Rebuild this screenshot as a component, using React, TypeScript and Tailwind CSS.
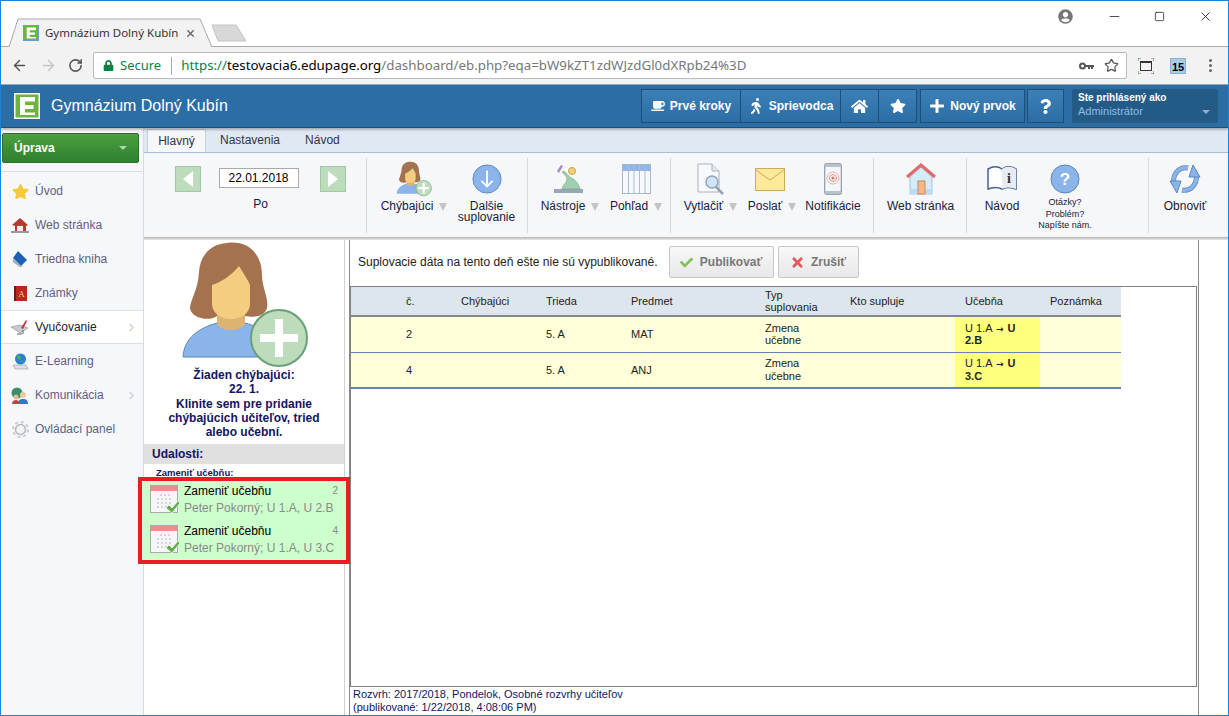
import { ArrowLeft, ArrowRight, ChevronRight, Minus, RotateCw, Square, Star, X } from "lucide-react";
import type { ReactNode } from "react";
import { FaCheck, FaCoffee, FaHome, FaLock, FaPlus, FaQuestion, FaStar, FaTimes, FaUserCircle, FaWalking } from "react-icons/fa";

const Caret = () => (
  <span className="inline-block w-0 h-0 border-x-[4px] border-x-transparent border-t-[8px] border-t-[#c4c4c4]" />
);

function ELogo({ size, edge = "#fff" }: { size: number; edge?: string }) {
  return (
    <svg width={size} height={size} viewBox="0 0 26 26">
      <rect x=".75" y=".75" width="24.500" height="24.500" fill="#6cb33f" stroke={edge} strokeWidth="1.500" />
      <path d="M6 4h15v4.500H11V12h8.500v4H11v3.500h10V22H6z" fill="#fff" />
    </svg>
  );
}

function Teacher({ size }: { size: number }) {
  return (
    <svg width={size} height={(size * 128) / 130} viewBox="0 0 130 128">
      <path d="M4 117C5 98 20 88 38 83H66C85 88 98 98 102 117Z" fill="#8ab4ea" stroke="#5b86bf" />
      <path d="M38 70H66V84C60 92 44 92 38 84Z" fill="#dcb36f" />
      <path d="M48 3C70 0 83 15 83 35C83 48 90 58 88 68C86 76 76 78 66 76V60H38V76C30 82 12 78 11 68C12 58 19 50 20 32C21 15 32 4 48 3Z" fill="#a57250" />
      <path d="M33 45C42 42 52 36 60 26C65 34 69 40 71 45V64C71 73 62 79 52 79C42 79 33 73 33 64Z" fill="#f5cd80" />
      <circle cx="100" cy="98" r="28" fill="#bcdcbc" stroke="#6aa078" strokeWidth="2" />
      <path d="M96 79h8v15h15v8h-15v15h-8v-15H81v-8h15z" fill="#fff" />
    </svg>
  );
}

function CalendarCheck() {
  return (
    <svg width="31" height="31" viewBox="0 0 31 31" className="shrink-0 mt-[1px]">
      <rect x=".5" y=".5" width="27" height="27" fill="#f6f6f8" stroke="#a9a9a9" />
      <rect x="1" y="1" width="26" height="5" fill="#f28b8b" />
      <path d="M10 10h12M7 14h15M7 18h15M7 22h12" stroke="#d3d6dc" strokeWidth="2" strokeDasharray="2 2" />
      <path d="M16 23l3-3 3 3 6-7 2 2-8 10z" fill="#5fae45" stroke="#fff" strokeWidth=".7" />
    </svg>
  );
}

const icons: Record<string, ReactNode> = {
  arrowDown: (
    <svg width="30" height="30" viewBox="0 0 32 32">
      <circle cx="16" cy="16" r="15" fill="#8ab4ea" stroke="#5b86bf" />
      <path d="M16 7v17M10 18l6 6 6-6" stroke="#fff" strokeWidth="2" fill="none" />
    </svg>
  ),
  tools: (
    <svg width="32" height="32" viewBox="0 0 32 32" className="mr-[5px]">
      <rect x="2" y="26" width="29" height="4" fill="#9aa5b5" />
      <path d="M10 26c1-5 5-6 5-10 0-2-2-4-5-7l2-1c3 3 5 5 7 7 3 1 7 4 9 11z" fill="#9fcfb0" stroke="#6fa585" strokeWidth=".6" />
      <path d="M5 8l4-6 2 1-4 7z" fill="#a78ac6" />
      <circle cx="20" cy="8" r="3.500" fill="#f1d27a" stroke="#c6a24a" />
    </svg>
  ),
  grid: (
    <svg width="29" height="30" viewBox="0 0 29 30">
      <rect x=".5" y=".5" width="28" height="29" fill="#f5f8fc" stroke="#a9b6c6" />
      <rect x="1" y="1" width="27" height="6" fill="#8fb6e4" />
      <path d="M6.500 1v28M12 1v28M17.500 1v28M23 1v28" stroke="#a9bdd6" />
    </svg>
  ),
  doc: (
    <svg width="28" height="32" viewBox="0 0 28 32">
      <path d="M1 1h14l7 7v21H1z" fill="#f7f9fc" stroke="#a9b3c0" />
      <path d="M15 1v7h7" fill="#e5e9ef" stroke="#a9b3c0" />
      <circle cx="15" cy="19" r="6" fill="#cfe4f6" stroke="#94a3b3" strokeWidth="1.500" />
      <path d="M19 24l7 7" stroke="#94a3b3" strokeWidth="2.500" />
    </svg>
  ),
  mail: (
    <svg width="30" height="23" viewBox="0 0 30 23" className="mr-[4px]">
      <rect x=".5" y=".5" width="29" height="22" fill="#fde99a" stroke="#c9a95a" />
      <path d="M1 2l14 10L29 2" fill="none" stroke="#c9a95a" />
    </svg>
  ),
  phone: (
    <svg width="18" height="32" viewBox="0 0 18 32">
      <rect x=".5" y=".5" width="17" height="31" rx="2" fill="#b9c2cc" stroke="#98a2ae" />
      <rect x="1.500" y="4" width="15" height="24" fill="#f4f6f8" />
      <circle cx="9" cy="15" r="6" fill="none" stroke="#eeb0ae" />
      <circle cx="9" cy="15" r="3.500" fill="none" stroke="#e88f8c" />
      <circle cx="9" cy="15" r="1.500" fill="#e0726e" />
    </svg>
  ),
  house: (
    <svg width="30" height="32" viewBox="0 0 30 32">
      <path d="M4 14L15 4l11 10v17H4z" fill="#d4ebfb" stroke="#a9c2d8" />
      <path d="M4 26h22v5H4z" fill="#bddcf3" />
      <path d="M1 14L15 2l14 12" fill="none" stroke="#e06a6a" strokeWidth="3" />
      <rect x="12" y="18" width="7" height="13" fill="#f4b78a" stroke="#c98a5b" />
    </svg>
  ),
  book: (
    <svg width="30" height="28" viewBox="0 0 30 28">
      <path d="M1 4c5-3 10-3 14 0 4-3 9-3 14 0v20c-5-2-10-2-14 0-4-2-9-2-14 0z" fill="#fff" stroke="#44638a" strokeWidth="1.500" />
      <path d="M15 4c4-3 9-3 14 0v20c-5-2-10-2-14 0z" fill="#e6ecf2" />
      <text x="22" y="18" textAnchor="middle" fontSize="14" fontWeight="700" fill="#333" fontFamily="Liberation Serif, serif">i</text>
    </svg>
  ),
  question: (
    <svg width="30" height="30" viewBox="0 0 30 30">
      <circle cx="15" cy="15" r="14" fill="#8ab4ea" stroke="#5b86bf" />
      <text x="15" y="21" textAnchor="middle" fontSize="17" fontWeight="700" fill="#fff" fontFamily="Liberation Sans, sans-serif">?</text>
    </svg>
  ),
  refresh: (
    <svg width="32" height="32" viewBox="0 0 32 32">
      <path d="M19 5A12 12 0 0 0 6 22" fill="none" stroke="#5b86bf" strokeWidth="5" />
      <path d="M13 27A12 12 0 0 0 26 10" fill="none" stroke="#5b86bf" strokeWidth="5" />
      <path d="M19 5A12 12 0 0 0 6 22" fill="none" stroke="#8ab4ea" strokeWidth="3.500" />
      <path d="M13 27A12 12 0 0 0 26 10" fill="none" stroke="#8ab4ea" strokeWidth="3.500" />
      <path d="M1 18h11l-4 12zM31 14H20l4-12z" fill="#8ab4ea" stroke="#5b86bf" />
    </svg>
  ),
};

function RibbonItem({
  w,
  icon,
  label,
  caret,
}: {
  w: number;
  icon: ReactNode;
  label: string;
  caret?: boolean;
}) {
  return (
    <div style={{ width: w }} className="flex flex-col items-center shrink-0 pt-[3px]">
      <div className="h-[36px] flex items-center justify-center">{icon}</div>
      <div className="mt-[4px] text-[12px] leading-[11px] text-center text-[#1a1a40] flex items-start gap-[6px] whitespace-pre-line">
        <span>{label}</span>
        {caret && <span className="mt-[1px]"><Caret /></span>}
      </div>
    </div>
  );
}

function Sep({ w, children }: { w: number; children: ReactNode }) {
  return (
    <div style={{ width: w }} className="h-[75px] shrink-0 flex border-r border-[#d8dbde]">
      {children}
    </div>
  );
}

function Ribbon() {
  return (
    <div className="h-[85px] bg-[#f5f7f9] flex pt-[5px] border-t border-[#a9bdd3] shrink-0">
      <div className="w-[223px] h-[75px] shrink-0 border-r border-[#d8dbde] pt-[8px] flex flex-col items-center pl-[31px] pr-[20px]">
        <div className="flex items-center justify-between w-full">
          <button className="w-[26px] h-[26px] bg-[#bcdcbc] border border-[#a0c8a8] flex items-center justify-center">
            <span className="w-0 h-0 border-y-[8px] border-y-transparent border-r-[10px] border-r-white" />
          </button>
          <div className="w-[80px] h-[20px] -mt-[2px] mr-[4px] bg-white border border-[#aaa] text-[12px] leading-[18px] text-center text-black">22.01.2018</div>
          <button className="w-[26px] h-[26px] bg-[#bcdcbc] border border-[#a0c8a8] flex items-center justify-center">
            <span className="w-0 h-0 border-y-[8px] border-y-transparent border-l-[10px] border-l-white" />
          </button>
        </div>
        <span className="text-[12px] mt-[3px] text-[#1a1a40]">Po</span>
      </div>
      <Sep w={161}>
        <div className="flex pl-[7px]">
          <RibbonItem w={80} icon={<Teacher size={36} />} label="Chýbajúci" caret />
          <RibbonItem w={65} icon={icons.arrowDown} label={"Dalšie\nsuplovanie"} />
        </div>
      </Sep>
      <Sep w={143}>
        <div className="flex pl-[9px]">
          <RibbonItem w={66} icon={icons.tools} label="Nástroje" caret />
          <RibbonItem w={66} icon={icons.grid} label="Pohľad" caret />
        </div>
      </Sep>
      <Sep w={203}>
        <div className="flex pl-[7px]">
          <RibbonItem w={65} icon={icons.doc} label="Vytlačiť" caret />
          <RibbonItem w={58} icon={icons.mail} label="Poslať" caret />
          <RibbonItem w={64} icon={icons.phone} label="Notifikácie" />
        </div>
      </Sep>
      <Sep w={93}>
        <RibbonItem w={93} icon={icons.house} label="Web stránka" />
      </Sep>
      <Sep w={182}>
        <div className="flex pl-[7px]">
          <RibbonItem w={56} icon={icons.book} label="Návod" />
          <div className="w-[70px] flex flex-col items-center shrink-0 pt-[3px]">
            <div className="h-[36px] flex items-center">{icons.question}</div>
            <div className="text-[9px] leading-[11.500px] text-center text-[#1a1a40]">Otázky?<br />Problém?<br />Napíšte nám.</div>
          </div>
        </div>
      </Sep>
      <RibbonItem w={72} icon={icons.refresh} label="Obnoviť" />
    </div>
  );
}

function TopBar() {
  return (
    <>
      <div className="h-[46px] bg-white flex items-end justify-between shrink-0 relative border-b border-[#aaa]">
        <div className="flex items-end pl-[7px]">
          <div className="relative w-[206px] h-[29px] -mb-px">
            <svg className="absolute inset-0" width="206" height="29" viewBox="0 0 206 29">
              <path d="M0 29h1L10 1h182l12 28h2" fill="#f2f2f2" stroke="#a8a8a8" />
            </svg>
            <div className="relative flex items-center h-full pl-[15px] pt-[1px]">
              <ELogo size={16} edge="#5b9bd5" />
              <span className="ml-[6px] text-[11.500px] text-[#333] font-['Noto_Sans',sans-serif] w-[140px] whitespace-nowrap">Gymnázium Dolný Kubín</span>
              <X size={11} strokeWidth={3} className="text-[#666]" />
            </div>
          </div>
          <svg width="36" height="20" viewBox="0 0 36 20" className="mb-[3px] -ml-[3px]">
            <path d="M1 2h24l10 16H7z" fill="#d8d8d8" stroke="#c4c4c4" />
          </svg>
        </div>
        <div className="self-start flex items-center h-[30px] pr-[15px] text-[#444]">
          <FaUserCircle size={15} className="text-[#777] mr-[34px]" />
          <Minus size={15} strokeWidth={1.5} className="mr-[32px]" />
          <Square size={11} strokeWidth={1.5} className="mr-[33px] text-black" />
          <X size={15} strokeWidth={1.2} className="text-black" />
        </div>
      </div>
      <div className="h-[38px] bg-[#f2f2f2] flex items-center shrink-0 border-b border-[#9aa5b0]">
        <ArrowLeft size={17} className="ml-[10px] text-[#555]" />
        <ArrowRight size={17} className="ml-[12px] text-[#c4c4c4]" />
        <RotateCw size={15} strokeWidth={2.5} className="ml-[11px] text-[#555]" />
        <div className="ml-[10px] w-[1034px] h-[27px] bg-white rounded-[2px] border border-[#bbb] flex items-center pl-[9px] pr-[7px] text-[13.300px] font-['Noto_Sans',sans-serif] whitespace-nowrap">
          <FaLock size={11} className="text-[#0b8043]" />
          <span className="ml-[6px] text-[#0b8043] text-[13px]">Secure</span>
          <span className="w-px h-[18px] bg-[#aaa] ml-[10px] mr-[9px]" />
          <span className="text-[#0b8043]">https://</span>
          <span className="text-black">testovacia6.edupage.org</span>
          <span className="text-[#777]">/dashboard/eb.php?eqa=bW9kZT1zdWJzdGl0dXRpb24%3D</span>
          <svg width="15" height="8" viewBox="0 0 15 8" className="ml-auto mr-[10px]">
            <circle cx="3.500" cy="4" r="2.500" fill="none" stroke="#555" strokeWidth="2" />
            <path d="M6 3h9v2h-1v2h-2V5h-1v2H9V5H6z" fill="#555" />
          </svg>
          <Star size={15} className="text-[#555]" />
        </div>
        <svg width="16" height="16" viewBox="0 0 16 16" className="ml-[11px]">
          <path d="M0 3V0h3M13 0h3v3M16 13v3h-3M3 16H0v-3" fill="none" stroke="#3a8f3a" />
          <rect x="2.500" y="3.500" width="11" height="9" fill="none" stroke="#333" />
          <path d="M2 3h12v2H2z" fill="#333" />
        </svg>
        <span className="ml-[16px] w-[16px] h-[16px] bg-[#a8cce8] text-[11px] leading-[16px] font-bold text-black text-center border border-[#88b0d0]">15</span>
        <span className="ml-[23px] flex flex-col gap-[2px]">
          <i className="w-[3px] h-[3px] rounded-full bg-[#666]" />
          <i className="w-[3px] h-[3px] rounded-full bg-[#666]" />
          <i className="w-[3px] h-[3px] rounded-full bg-[#666]" />
        </span>
      </div>
    </>
  );
}

function HeaderBtn({ icon, label, className }: { icon: ReactNode; label?: string; className: string }) {
  return (
    <button className={`h-[34px] flex items-center justify-center gap-[5px] border border-[#1d4f78] bg-linear-to-b from-[#3c80b8] to-[#2c6ea4] text-white text-[12px] font-bold ${className}`}>
      {icon}
      {label && <span>{label}</span>}
    </button>
  );
}

function Header() {
  return (
    <div className="h-[43px] bg-[#2c6ea4] flex items-center pl-[13px] shrink-0 border-b border-[#1d4f78] shadow-[0_2px_2px_rgba(0,0,0,0.25)] relative z-20">
      <ELogo size={26} />
      <span className="ml-[11px] text-[16px] text-white">Gymnázium Dolný Kubín</span>
      <div className="ml-auto flex items-center pr-[10px]">
        <HeaderBtn className="w-[100px]" icon={<FaCoffee size={14} />} label="Prvé kroky" />
        <HeaderBtn className="w-[101px] -ml-px" icon={<FaWalking size={16} />} label="Sprievodca" />
        <HeaderBtn className="w-[39px] -ml-px" icon={<FaHome size={17} />} />
        <HeaderBtn className="w-[39px] -ml-px" icon={<FaStar size={16} />} />
        <HeaderBtn className="w-[105px] ml-[3px]" icon={<FaPlus size={16} />} label="Nový prvok" />
        <HeaderBtn className="w-[37px] ml-[2px]" icon={<FaQuestion size={15} />} />
        <div className="ml-[8px] w-[146px] h-[34px] bg-[#245a86] rounded-[2px] pl-[6px] pr-[8px] pt-[3px]">
          <div className="text-[10px] leading-[12px] font-bold text-white">Ste prihlásený ako</div>
          <div className="flex items-center justify-between">
            <span className="text-[11px] leading-[15px] text-[#8fbde6]">Administrátor</span>
            <span className="w-0 h-0 border-x-[4px] border-x-transparent border-t-[4px] border-t-[#8fb0cc]" />
          </div>
        </div>
      </div>
    </div>
  );
}

const navIcons: Record<string, ReactNode> = {
  star: <FaStar size={17} className="text-[#f4c93c]" />,
  web: (
    <svg width="18" height="16" viewBox="0 0 18 16">
      <path d="M1 8l8-7 8 7-2 1v5H4V9z" fill="#b53a32" />
      <rect x="6" y="9" width="6" height="5" fill="#eee" />
      <path d="M0 14h18v2H0z" fill="#999" />
    </svg>
  ),
  book: (
    <svg width="16" height="16" viewBox="0 0 16 16">
      <path d="M6 0l9 9-6 6-8-8z" fill="#1d5fb4" />
      <path d="M1 8l8 7h3l-4 1-7-5z" fill="#9aa8b8" />
    </svg>
  ),
  grades: (
    <svg width="13" height="15" viewBox="0 0 13 15">
      <rect width="13" height="15" fill="#b9291c" />
      <rect width="2" height="15" fill="#7a160e" />
      <text x="7.500" y="11" textAnchor="middle" fontSize="9" fill="#f6cfa0" fontFamily="Liberation Serif, serif">A</text>
    </svg>
  ),
  teach: (
    <svg width="18" height="15" viewBox="0 0 18 15">
      <path d="M0 7l9 6 8-5-8-3z" fill="#c7ccd4" stroke="#777" strokeWidth=".5" />
      <path d="M10 8l5-8 1 1-4 8z" fill="#c0303a" />
      <path d="M6 14h5M12 10v4" stroke="#666" />
    </svg>
  ),
  elearn: (
    <svg width="17" height="17" viewBox="0 0 17 17">
      <circle cx="8.500" cy="6" r="5.500" fill="#2a7fd0" />
      <path d="M5 3c2-1 4 0 4 2s-3 2-4 0zM9 8c2-1 3 0 2 2z" fill="#4cae4c" />
      <path d="M1 12h13l2 4H3z" fill="#d9dfe6" stroke="#888" strokeWidth=".5" />
    </svg>
  ),
  people: (
    <svg width="18" height="17" viewBox="0 0 18 17">
      <circle cx="6" cy="6" r="5.500" fill="#3a8f6a" />
      <circle cx="12" cy="8" r="3" fill="#f0c9a0" />
      <path d="M7 17c0-4 2-5 5-5s5 1 5 5z" fill="#2d78c8" />
      <circle cx="5" cy="10" r="2.500" fill="#e8bd94" />
      <path d="M1 17c0-3 2-4 4-4s3 1 3 4z" fill="#c0443c" />
    </svg>
  ),
  panel: (
    <svg width="17" height="17" viewBox="0 0 17 17">
      <circle cx="8.500" cy="8.500" r="5" fill="#f2f3f5" stroke="#b4b8bd" strokeWidth="1.500" />
      <circle cx="8.500" cy="8.500" r="7.500" fill="none" stroke="#c8ccd0" strokeWidth="2" strokeDasharray="3 2.900" />
    </svg>
  ),
};

const navItems = [
  { key: "star", label: "Úvod" },
  { key: "web", label: "Web stránka" },
  { key: "book", label: "Triedna kniha" },
  { key: "grades", label: "Známky" },
  { key: "teach", label: "Vyučovanie", active: true, more: true },
  { key: "elearn", label: "E-Learning" },
  { key: "people", label: "Komunikácia", more: true },
  { key: "panel", label: "Ovládací panel" },
];

function Sidebar() {
  return (
    <aside className="w-[143px] shrink-0 bg-[#f5f7fa] border-r border-[#d5dbe2] flex flex-col">
      <div className="h-[44px] border-b border-[#d8dde3] mx-[1px] pt-[5px] shrink-0">
        <button className="ml-[0px] w-[137px] h-[30px] bg-linear-to-b from-[#4aa03f] to-[#2f8030] border border-[#2b702c] rounded-[2px] flex items-center justify-between pl-[11px] pr-[11px] text-white text-[12px] font-bold">
          Úprava
          <span className="w-0 h-0 border-x-[4px] border-x-transparent border-t-[4px] border-t-[#b5d0b0]" />
        </button>
      </div>
      <div className="pt-[2px]">
        {navItems.map((n) => (
          <div
            key={n.label}
            className={`h-[34px] flex items-center pl-[10px] pr-[5px] text-[12px] ${n.active ? "bg-white border-y border-[#dcdfe3] text-[#223]" : "text-[#5f5f80]"}`}
          >
            <span className="w-[18px] flex justify-center">{navIcons[n.key]}</span>
            <span className="ml-[6px] flex-1">{n.label}</span>
            {n.more && <ChevronRight size={13} className="text-[#ccd]" />}
          </div>
        ))}
      </div>
    </aside>
  );
}

const events = [
  { n: 2, detail: "Peter Pokorný; U 1.A, U 2.B" },
  { n: 4, detail: "Peter Pokorný; U 1.A, U 3.C" },
];

function LeftPanel() {
  return (
    <div className="w-[201px] shrink-0 bg-white border-r border-[#d0d0d0] flex flex-col relative z-10">
      <div className="pl-[35px]">
        <Teacher size={130} />
      </div>
      <div className="text-[12px] leading-[14.300px] font-bold text-center text-[#14145f]">
        Žiaden chýbajúci:<br />22. 1.<br />Klinite sem pre pridanie<br />chýbajúcich učiteľov, tried<br />alebo učební.
      </div>
      <div className="mt-[5px] h-[20px] bg-[#e0e0e0] pl-[8px] text-[12px] leading-[20px] font-bold text-[#14145f]">Udalosti:</div>
      <div className="pl-[12px] pt-[3px] text-[9.500px] leading-[12px] font-bold text-[#14145f] h-[13px]">Zameniť učebňu:</div>
      <div className="-ml-[6px] -mr-[6px] border-4 border-[#ed1c24] bg-[#ccffcc] h-[87px]">
        {events.map((e) => (
          <div key={e.n} className="h-[40px] flex pl-[8px] pr-[8px] pt-[3px]">
            <CalendarCheck />
            <div className="ml-[3px] flex-1">
              <div className="text-[12px] leading-[14px] text-black flex justify-between">
                Zameniť učebňu
                <span className="text-[10px] text-[#888]">{e.n}</span>
              </div>
              <div className="mt-[3px] text-[12px] leading-[14px] text-[#8a8a8a] whitespace-nowrap">{e.detail}</div>
            </div>
          </div>
        ))}
      </div>
    </div>
  );
}

const rows = [
  { n: "2", cls: "5. A", subject: "MAT", to: "2.B" },
  { n: "4", cls: "5. A", subject: "ANJ", to: "3.C" },
];

function MainPanel() {
  return (
    <div className="flex-1 flex ml-[4px] min-w-0">
      <div className="w-[850px] shrink-0 flex flex-col border-x border-[#8a8a8a]">
        <div className="h-[46px] flex items-center pl-[8px] pb-[2px] shrink-0 text-[12px] text-[#222]">
          <span>Suplovacie dáta na tento deň ešte nie sú vypublikované.</span>
          <button className="ml-[11px] w-[105px] h-[32px] border border-[#c8c8c8] rounded-[2px] bg-linear-to-b from-[#f8f8f8] to-[#e8e8e8] flex items-center justify-center gap-[7px] font-bold text-[#777]">
            <FaCheck size={13} className="text-[#7fc25a]" /> Publikovať
          </button>
          <button className="ml-[4px] w-[81px] h-[32px] border border-[#c8c8c8] rounded-[2px] bg-linear-to-b from-[#f8f8f8] to-[#e8e8e8] flex items-center justify-center gap-[6px] font-bold text-[#777]">
            <FaTimes size={15} className="text-[#e05a5a]" /> Zrušiť
          </button>
        </div>
        <div className="flex-1 border border-[#808080] mr-px min-h-0">
          <table className="table-fixed border-collapse text-[11px] leading-[12.500px] text-[#222] w-[770px]">
            <colgroup>
              <col className="w-[45px]" />
              <col className="w-[55px]" />
              <col className="w-[85px]" />
              <col className="w-[85px]" />
              <col className="w-[134px]" />
              <col className="w-[85px]" />
              <col className="w-[115px]" />
              <col className="w-[85px]" />
              <col className="w-[81px]" />
            </colgroup>
            <thead>
              <tr className="h-[29px] bg-[#dde6ed] border-b-2 border-[#808890] text-left">
                {["", "č.", "Chýbajúci", "Trieda", "Predmet", "Typ suplovania", "Kto supluje", "Učebňa", "Poznámka"].map((h) => (
                  <th key={h} className="font-normal px-[10px] py-0 align-middle">{h}</th>
                ))}
              </tr>
            </thead>
            <tbody>
              {rows.map((r, i) => (
                <tr key={r.n} className={`h-[36px] bg-[#ffffd9] ${i === 1 ? "border-b-2 border-[#6585b0]" : "border-b border-[#6585b0]"}`}>
                  <td />
                  <td className="px-[10px]">{r.n}</td>
                  <td />
                  <td className="px-[10px]">{r.cls}</td>
                  <td className="px-[10px]">{r.subject}</td>
                  <td className="px-[10px]">Zmena učebne</td>
                  <td />
                  <td className="px-[10px] bg-[#ffff80]">
                    <div>U 1.A <b className="font-['DejaVu_Sans',sans-serif] text-[9px] leading-[10px] mx-[1px]">→</b> <b>U</b></div>
                    <b>{r.to}</b>
                  </td>
                  <td />
                </tr>
              ))}
            </tbody>
          </table>
        </div>
        <div className="h-[28px] shrink-0 pl-[3px] pt-[1px] text-[11px] leading-[12.500px] text-[#14145f]">
          Rozvrh: 2017/2018, Pondelok, Osobné rozvrhy učiteľov<br />(publikované: 1/22/2018, 4:08:06 PM)
        </div>
      </div>
    </div>
  );
}

export default function App() {
  return (
    <div className="w-[1229px] h-[716px] overflow-hidden border border-[#1c84d8] flex flex-col bg-white font-['Liberation_Sans',Arial,sans-serif]">
      <TopBar />
      <Header />
      <div className="flex-1 flex min-h-0">
        <Sidebar />
        <div className="flex-1 flex flex-col min-w-0">
          <div className="h-[24px] bg-[#dfe8f3] flex items-end pl-[3px] text-[12px] text-[#334] shrink-0">
            <span className="h-[23px] w-[59px] bg-[#f5f7f9] border border-b-0 border-[#c5d0dc] leading-[22px] text-center">Hlavný</span>
            <span className="h-[23px] leading-[22px] ml-[14px]">Nastavenia</span>
            <span className="h-[23px] leading-[22px] ml-[25px]">Návod</span>
          </div>
          <Ribbon />
          <div className="h-[3px] bg-linear-to-b from-[#b5b5b5] to-[#e8e8e8] shrink-0" />
          <div className="flex-1 flex min-h-0">
            <LeftPanel />
            <MainPanel />
          </div>
        </div>
      </div>
    </div>
  );
}
